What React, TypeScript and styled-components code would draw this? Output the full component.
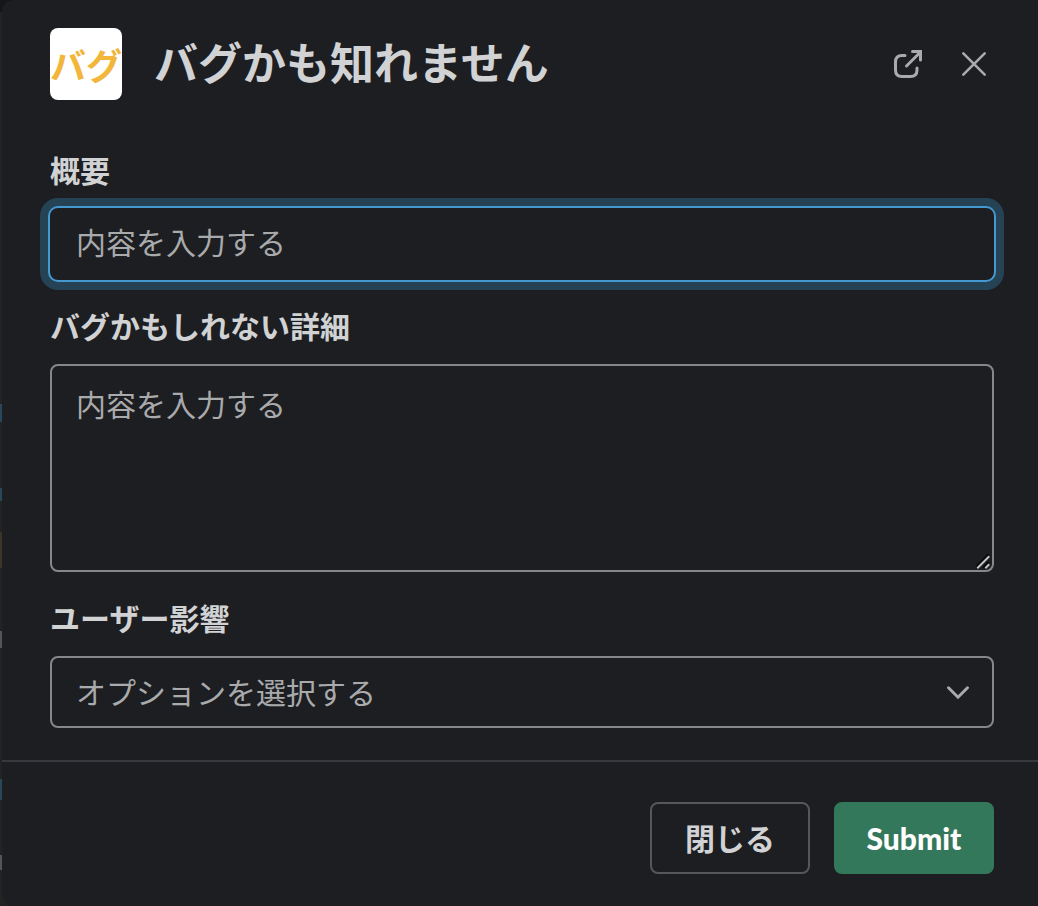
import React from "react";
import styled, { createGlobalStyle, css } from "styled-components";

const color = {
  surface: "#1d1e22",
  text: "#d1d2d3",
  muted: "#a9aaac",
  border: "#868789",
  divider: "#38393e",
  focus: "#4499d1",
  focusRing: "#264355",
  primary: "#34785c",
};

const GlobalStyle = createGlobalStyle`
  *, *::before, *::after { box-sizing: border-box; }
  html, body, #root { min-height: 100vh; }
  body {
    margin: 0;
    background: #222423;
    color: ${color.text};
    font-family: Lato, "Noto Sans CJK JP", sans-serif;
  }
  button, input, textarea, select { font: inherit; }
`;

/* Dimmed slice of the conversation that stays visible behind the dialog. */
const Backdrop = styled.div`
  min-height: 100vh;
  padding-left: 2px;
  background: linear-gradient(
    to bottom,
    #151618 0 12px,
    #222423 12px 404px,
    #29475a 404px 422px,
    #222423 422px 488px,
    #29475a 488px 501px,
    #222423 501px 532px,
    #3d3326 532px 568px,
    #222423 568px 631px,
    #545554 631px 648px,
    #222423 648px 779px,
    #29475a 779px 800px,
    #222423 800px 855px,
    #545554 855px 870px,
    #222423 870px
  );
`;

const Dialog = styled.form`
  display: flex;
  flex-direction: column;
  min-height: 100vh;
  background: ${color.surface};
  border-radius: 12px 0 0 12px;
`;

const Header = styled.header`
  display: flex;
  align-items: center;
  gap: 32px;
  padding: 28px 44px 0 48px;
`;

const AppIcon = styled.div`
  display: flex;
  align-items: center;
  justify-content: center;
  flex: none;
  width: 72px;
  height: 72px;
  border-radius: 8px;
  background: #fff;
  color: #f2b63a;
  font: 700 36px/72px "Noto Sans CJK JP", sans-serif;
  white-space: nowrap;
`;

const Title = styled.h1`
  flex: 1;
  margin: 0;
  padding-bottom: 2px;
  font-size: 44px;
  font-weight: 700;
  line-height: 70px;
`;

const HeaderActions = styled.div`
  display: flex;
  gap: 26px;
`;

const IconButton = styled.button`
  display: grid;
  place-items: center;
  width: 40px;
  height: 40px;
  padding: 0;
  border: 0;
  background: none;
  color: ${color.muted};
  cursor: pointer;
`;

const Body = styled.div`
  display: flex;
  flex-direction: column;
  gap: 26px;
  padding: 50px 44px 32px 48px;
`;

const Field = styled.div`
  display: flex;
  flex-direction: column;
  gap: 18px;
`;

const Label = styled.label`
  font-size: 30px;
  font-weight: 700;
  line-height: 40px;
`;

const control = css`
  display: block;
  width: 100%;
  height: 72px;
  margin: 0;
  padding: 0 24px;
  border: 2px solid ${color.border};
  border-radius: 8px;
  outline: none;
  background: ${color.surface};
  color: ${color.muted};
  font-size: 30px;
  line-height: 44px;

  &::placeholder {
    color: ${color.muted};
    opacity: 1;
  }
`;

const TextInput = styled.input<{ $active?: boolean }>`
  ${control}
  padding-bottom: 4px;
  ${({ $active }) =>
    $active &&
    css`
      border-color: transparent;
      box-shadow: 0 0 0 2px ${color.focus}, 0 0 0 10px ${color.focusRing};
    `}
`;

const TextArea = styled.textarea`
  ${control}
  height: 208px;
  padding: 16px 24px;
  resize: vertical;

  &::-webkit-resizer {
    background: transparent;
  }
`;

const Select = styled.select`
  ${control}
  padding-right: 64px;
  appearance: none;
`;

const ControlWrap = styled.div`
  position: relative;
`;

const Grip = styled.svg`
  position: absolute;
  right: 2px;
  bottom: 2px;
  pointer-events: none;
`;

const Chevron = styled.svg`
  position: absolute;
  top: 24px;
  right: 24px;
  pointer-events: none;
`;

const Footer = styled.footer`
  display: flex;
  justify-content: flex-end;
  gap: 24px;
  padding: 40px 44px 32px 48px;
  border-top: 2px solid ${color.divider};
`;

const Button = styled.button<{ $primary?: boolean }>`
  min-width: 160px;
  height: 72px;
  padding: 0 24px;
  border: 2px solid ${({ $primary }) => ($primary ? color.primary : "#56575b")};
  border-radius: 8px;
  background: ${({ $primary }) => ($primary ? color.primary : "transparent")};
  color: ${({ $primary }) => ($primary ? "#fff" : color.text)};
  font-size: 30px;
  font-weight: ${({ $primary }) => ($primary ? 900 : 700)};
  line-height: 44px;
  cursor: pointer;
`;

export default function App() {
  return (
    <>
      <GlobalStyle />
      <Backdrop>
        <Dialog
          role="dialog"
          aria-labelledby="dialog-title"
          onSubmit={(event: React.FormEvent) => event.preventDefault()}
        >
          <Header>
            <AppIcon aria-hidden="true">バグ</AppIcon>
            <Title id="dialog-title">バグかも知れません</Title>
            <HeaderActions>
              <IconButton type="button" aria-label="新しいウィンドウで開く">
                <svg width="40" height="40" viewBox="0 0 40 40" fill="none" stroke="currentColor" strokeWidth="3" strokeLinecap="round">
                  <path d="M17 11.5H14Q7.5 11.5 7.5 18V26Q7.5 32.5 14 32.5H22.5Q29 32.5 29 26V24" />
                  <path d="M18.5 22L31.5 9" />
                  <path d="M24.5 7.5H32.5V16" strokeLinejoin="miter" />
                  <path d="M28 7.5H33V12.5Z" fill="currentColor" stroke="none" />
                </svg>
              </IconButton>
              <IconButton type="button" aria-label="閉じる">
                <svg width="40" height="40" viewBox="0 0 40 40" fill="none" stroke="currentColor" strokeWidth="2.6" strokeLinecap="round">
                  <path d="M9.3 9.3L30.7 30.7M30.7 9.3L9.3 30.7" />
                </svg>
              </IconButton>
            </HeaderActions>
          </Header>

          <Body>
            <Field>
              <Label htmlFor="summary">概要</Label>
              <TextInput id="summary" type="text" placeholder="内容を入力する" $active />
            </Field>

            <Field>
              <Label htmlFor="details">バグかもしれない詳細</Label>
              <ControlWrap>
                <TextArea id="details" placeholder="内容を入力する" />
                <Grip width="18" height="18" viewBox="0 0 18 18" fill="none" strokeLinecap="square">
                  <path d="M3 14L14 3M10 15L14 10.5" stroke="#08080a" strokeWidth="2" />
                  <path d="M4 15.5L14.5 5M12 15.5L14.5 13" stroke="#c4c4c5" strokeWidth="2" />
                </Grip>
              </ControlWrap>
            </Field>

            <Field>
              <Label htmlFor="impact">ユーザー影響</Label>
              <ControlWrap>
                <Select id="impact" defaultValue="">
                  <option value="">オプションを選択する</option>
                </Select>
                <Chevron width="24" height="24" viewBox="0 0 24 24" fill="none" stroke={color.muted} strokeWidth="3" strokeLinecap="round" strokeLinejoin="miter">
                  <path d="M2.5 7.8L12 17.2L21.5 7.8" />
                </Chevron>
              </ControlWrap>
            </Field>
          </Body>

          <Footer>
            <Button type="button">閉じる</Button>
            <Button type="submit" $primary>
              Submit
            </Button>
          </Footer>
        </Dialog>
      </Backdrop>
    </>
  );
}
